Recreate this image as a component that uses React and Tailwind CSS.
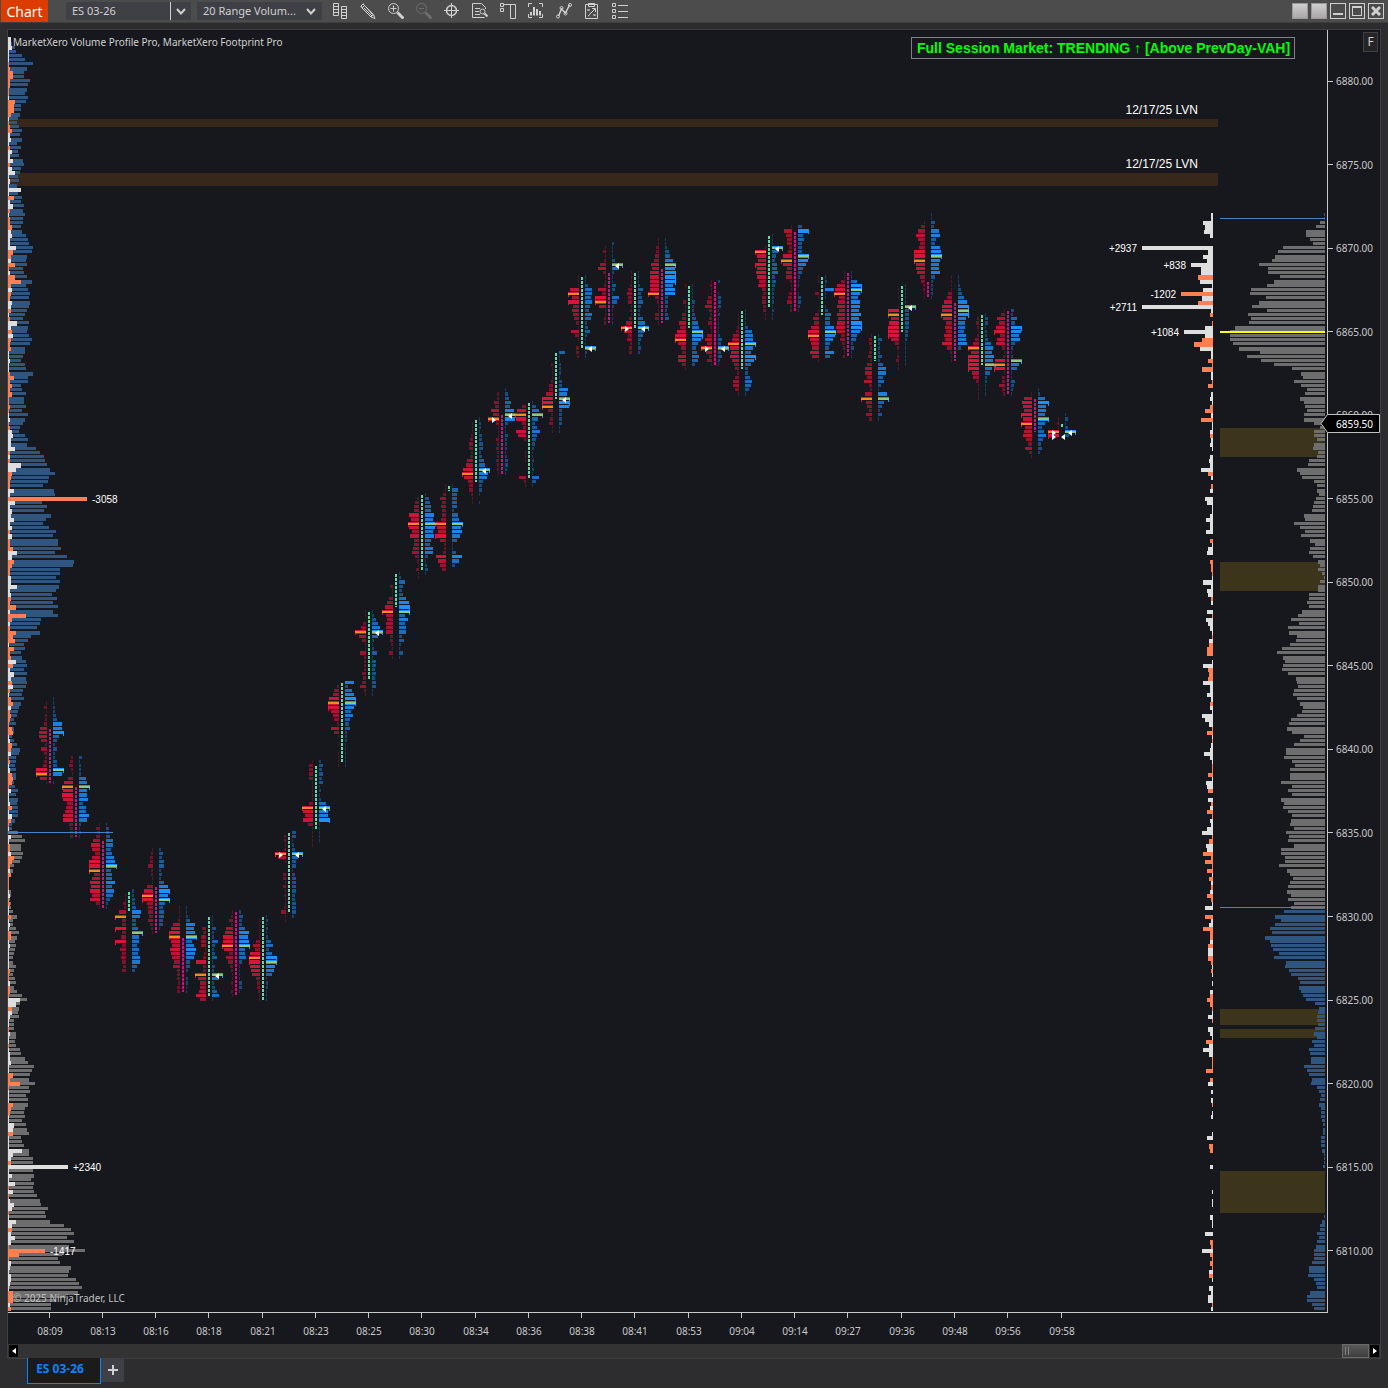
import React from 'react';

// Vertical scale: one row per 0.25 tick, row 0 is 6880.00
const ROW_PITCH = 4.1773;
const ROW_BASE = 79.16;
const CELL_BASE = 79.05;

const rowTop = (row) => Math.round(ROW_BASE + row * ROW_PITCH);
const rowHeight = (row) => rowTop(row) - rowTop(row - 1) - 1;
const cellTop = (row) => Math.round(CELL_BASE + row * ROW_PITCH);
const cellHeight = (row) => cellTop(row + 1) - cellTop(row) - 1;

const parsePairs = (text) =>
  text
    .trim()
    .split(/\s+/)
    .map((pair) => pair.split(',').map(Number));

// volume,delta for each row, from the top down
const LEFT_START = -10;
const LEFT_PROFILE = parsePairs(`
  1,3 4,3 7,4 8,1 14,1 17,1 25,-1 19,-2 16,-5 16,-5
  22,-2 20,-2 19,-1 17,-1 20,1 18,-7 13,-6 13,-6 12,-3 10,1
  9,-1 11,-2 14,-4 12,2 14,3 9,1 13,-2 10,4 11,2 15,5
  16,-2 13,4 12,7 10,1 11,2 9,1 0,13 10,1 14,-6 13,2
  16,5 15,-2 17,1 15,-2 15,-2 13,-4 14,3 18,4 20,2 21,2
  25,8 24,-5 19,-3 18,3 19,-7 15,-1 16,2 19,-7 24,-13 18,-3
  20,4 22,-3 21,-2 22,4 21,3 19,-3 17,1 15,-2 21,9 20,3
  19,-4 21,5 24,-3 22,-2 17,-3 17,1 15,1 13,2 17,1 18,1
  25,-2 20,-6 20,-2 13,-4 14,-2 18,-4 16,-1 16,-1 18,-2 14,-1
  20,1 17,2 15,-1 12,-2 11,4 17,5 20,3 19,3 28,7 32,-2
  36,2 37,-2 39,13 42,8 47,-4 41,-3 40,-2 35,-2 46,6 47,2
  46,0 34,7 39,2 36,4 43,3 38,6 35,2 41,4 48,-2 45,4
  50,-2 50,-2 53,-5 47,9 59,4 66,-6 65,-4 52,-2 52,-2 48,3
  52,3 51,9 48,2 44,3 49,-3 45,-2 50,-8 45,2 50,-18 33,-4
  32,2 29,-2 32,-8 23,-5 20,-7 16,1 17,-6 13,-2 14,-3 18,8
  19,-5 16,2 19,6 18,3 19,-4 18,5 15,-2 14,1 16,-3 13,-5
  11,3 10,-2 9,-3 6,-2 8,-1 6,-4 6,-5 4,1 6,2 9,-4
  12,-3 11,3 8,-1 8,-2 7,1 8,2 8,-4 8,-5 6,-4 7,-1
  10,3 8,1 10,1 9,2 10,-4 10,1 10,4 7,-3 4,-1 4,1
  10,0 14,3 17,1 13,-2 13,-2 15,3 14,-6 12,-4 6,-2 5,2
  0,-3 0,-1 0,-1 0,-1 3,1 3,2 2,-1 3,-2 3,1 5,1
  9,-3 5,1 5,2 8,1 11,-3 9,-3 7,1 8,2 7,1 6,1
  5,1 5,1 8,1 6,-2 5,-1 7,-1 8,2 6,-2 9,-2 14,-1
  19,12 12,8 11,-4 10,4 11,2 6,1 6,1 6,-1 8,2 8,1
  7,1 8,-1 12,1 13,2 17,2 20,3 26,1 24,1 22,-5 21,-2
  27,-12 21,-1 22,1 18,1 20,1 20,-5 17,-3 16,-2 17,1 14,1
  18,6 19,5 21,-5 13,1 14,1 16,1 21,14 21,5 25,3 25,-3
  25,0 25,1 26,4 23,1 26,7 25,-1 26,5 29,-1 32,2 33,6
  40,4 37,-1 38,1 42,8 56,4 63,-4 66,3 59,7 66,3 61,-1
  77,0 54,-11 50,-1 52,3 63,2 61,1 60,3 68,3 71,2 74,1
  70,-5 58,-5 48,-5 43,2 43,-3
`);

const RIGHT_START = 32;
const RIGHT_PROFILE = parsePairs(`
  1,2 1,2 5,10 9,8 19,9 19,3 15,0 12,0
  42,0 47,5 50,10 53,6 66,0 57,12 57,12 45,-15 51,13 58,1
  74,10 75,0 59,11 66,-15 73,0 58,2 77,-3 74,0 76,-1 90,8
  95,0 95,8 95,-11 92,-19 86,13 65,2 78,2 64,-5 51,-1 33,-11
  24,2 22,2 31,-1 24,-5 18,0 20,2 25,3 21,1 20,-3 18,-8
  21,2 21,-12 11,1 5,1 11,3 11,-3 8,2 11,3 12,1 7,0
  8,3 16,4 17,3 28,12 25,-5 23,2 11,0 8,-2 8,3 6,0
  9,8 11,6 12,1 13,1 21,3 20,7 31,3 25,3 20,7 24,0
  15,-3 10,1 15,5 16,6 12,0 7,-3 5,-2 7,-2 3,-1 1,1
  5,10 7,2 7,6 16,5 16,-2 18,2 16,0 23,6 27,-1 34,7
  26,5 37,3 36,1 28,-1 29,4 35,-4 43,-6 48,-6 42,0 40,1
  42,10 43,-5 37,-4 29,-5 28,10 27,3 31,3 32,6 28,2 25,-3
  22,3 23,1 28,11 34,8 36,4 38,-1 33,-6 21,1 25,-1 31,2
  39,3 39,9 41,3 33,1 30,-1 35,-1 35,-5 35,1 44,7 33,6
  37,-5 33,0 44,5 41,-2 42,3 37,-6 33,-1 34,3 35,2 31,6
  39,11 36,-1 37,-4 31,7 44,6 44,-10 40,-2 40,-8 46,-1 38,-6
  35,1 32,-4 35,2 37,-2 38,3 34,-6 37,-2 31,1 34,8 41,0
  50,-8 44,2 50,4 55,-10 53,-3 60,-3 55,3 54,-5 52,5 46,5
  51,-5 39,-2 40,1 36,-2 34,1 27,0 25,1 26,0 24,3 22,-3
  19,-6 10,-3 6,-1 7,1 8,5 8,-1 7,0 10,5 11,3 8,1
  13,-7 11,4 16,10 15,4 14,-1 14,-1 21,-1 18,-7 16,0 13,-3
  14,5 8,0 6,2 4,0 5,2 6,-1 4,0 4,1 4,2 3,0
  2,0 2,0 2,1 4,6 4,0 4,-4 3,-3 1,0 1,0 1,0
  2,3 0,0 0,0 0,0 0,0 0,0 0,1 0,0 0,1 0,1
  0,0 0,0 1,3 3,1 5,1 5,0 8,8 6,0 8,-3 9,-2
  11,11 11,-3 11,-1 13,-3 16,-1 16,4 17,-4 11,1 9,0 8,4
  15,2 18,5 18,5 13,-1 11,2
`);

const LEFT_CALLOUTS = [
  { row: 100, width: 79, label: '-3058' },
  { row: 260, width: 60, label: '+2340' },
  { row: 280, width: 37, label: '-1417' },
];

const RIGHT_CALLOUTS = [
  { row: 40, width: 71, label: '+2937' },
  { row: 44, width: 22, label: '+838' },
  { row: 51, width: 32, label: '-1202' },
  { row: 54, width: 71, label: '+2711' },
  { row: 60, width: 29, label: '+1084' },
];

// Footprint columns: first row, bid widths and ask widths (hex, one digit per row),
// bid POC row, ask POC row, body [from, to, up], sides with an imbalance arrow
const FOOTPRINTS = [
  [148, '01312237886263234bb71', '11223499b64242244b901', 166, 165, [729, 783, 0], ''],
  [162, '2342159baba678aa4333', '3122278b889477a82121', 169, 169, [787, 837, 0], ''],
  [178, '143479858bbb68a9a8a41', '1334775689b5669687421', 189, 188, [841, 908, 0], ''],
  [194, '011327b44b45b4645434', '2233498446b775768853', 200, 204, [892, 912, 1], ''],
  [184, '12335221169bb65545321', '2435523259b9b64554410', 195, 196, [887, 933, 0], ''],
  [198, '111279bb98a9867333233', '1124989b68a9844202211', 205, 205, [938, 992, 0], ''],
  [200, '00043555123a33b8667a6', '11142263235132b723571', 214, 214, [917, 996, 1], 'r'],
  [199, '124278aab947532112121', '24336a9ab667311113310', 207, 207, [912, 996, 0], ''],
  [200, '011111475abba98433211', '1212125736bb986122111', 210, 211, [917, 1000, 1], ''],
  [180, '02212b8100331312112511', '44123b6441344443344420', 185, 185, [833, 912, 1], 'lr'],
  [163, '14444111114ba8a511111', '24343412127b99b111110', 174, 174, [766, 829, 1], 'r'],
  [144, '0256abb86528510101111', '9379bb968545222111111', 149, 149, [683, 763, 1], ''],
  [127, '11035b741162222434621', '12468b621251443434411', 132, 132, [612, 679, 1], 'r'],
  [118, '000311468b76777332141', '1264347abb69677352141', 127, 127, [574, 607, 1], ''],
  [99, '02455a8ba795567421311', '1456698ba896588312310', 106, 106, [495, 570, 1], ''],
  [97, '113645445b98b6223a864', '165555267b9a85114a730', 106, 106, [486, 491, 1], ''],
  [81, '011123442367ab9544211', '122133442356b98433101', 94, 93, [420, 482, 1], 'r'],
  [74, '0225486b3111323223221', '134659ba3113222123321', 81, 80, [415, 474, 0], 'lr'],
  [77, '049ba43a8200111000721', '147b63585432112121741', 80, 80, [403, 478, 1], ''],
  [65, '00021112447bbb523411', '61122213398bba333311', 78, 76, [353, 399, 1], 'r'],
  [47, '1119b7b6765318410332', '11377675476235211b21', 51, 64, [277, 349, 1], 'r'],
  [39, '0131268311284bb71122', '21113b72114317521111', 53, 44, [273, 323, 0], 'r'],
  [46, '1112454412136b845233', '1112534532257b653232', 59, 59, [273, 328, 1], 'lr'],
  [38, '1133458799999b4211441', '112458babbb8aa3332340', 51, 44, [269, 323, 0], ''],
  [49, '100031144769bb8548841', '11113223467bb96457630', 62, 60, [286, 328, 1], ''],
  [48, '1211457323421575b6351', '2001333121111243b3421', 64, 64, [282, 365, 0], 'lr'],
  [55, '01112367b989754246641', '11113788b86b963357641', 63, 63, [311, 369, 1], ''],
  [37, '0001b98b9a97843443311', '111b64355634322221211', 41, 40, [236, 307, 1], 'r'],
  [35, '18655349b956621134522', '4b56444ba854211013321', 43, 42, [232, 311, 0], ''],
  [47, '1100410014658bb987971', '1219110136559ba854950', 61, 60, [277, 315, 1], ''],
  [46, '1148ab678687898453212', '116bb97998a8bb9652311', 51, 50, [273, 357, 0], ''],
  [61, '133234257758327b65363', '142224258856319b64241', 76, 76, [336, 361, 1], ''],
  [49, '011101bb8abbb84212311', '11111b444443321111110', 56, 54, [286, 332, 1], 'r'],
  [32, '001479756bbb998542211', '114389549ab9889422221', 43, 42, [282, 298, 0], ''],
  [47, '1111458aab967687a5211', '1123469bbb87768893000', 56, 55, [303, 361, 0], ''],
  [56, '02321246b8bbbb7631111', '133122368798b75221110', 64, 68, [315, 365, 1], ''],
  [55, '14869b589312abb133632', '3264ba894212b86114321', 68, 67, [311, 394, 0], ''],
  [74, '018a98b9b78964731', '127b887b746853420', 82, 81, [399, 432, 0], ''],
  [80, '0121bb', '1313b4', 84, 84, [424, 428, 1], 'lrx'],
].map(([start, bids, asks, bidPoc, askPoc, body, arrows], i) => ({
  start,
  bids,
  asks,
  bidPoc,
  askPoc,
  body,
  arrows,
  x: Math.floor(47 + 26.632 * i),
}));

const TIMES = [
  '08:09', '08:13', '08:16', '08:18', '08:21', '08:23', '08:25', '08:30', '08:34', '08:36',
  '08:38', '08:41', '08:53', '09:04', '09:14', '09:27', '09:36', '09:48', '09:56', '09:58',
];

const PRICES = Array.from({ length: 15 }, (_, i) => 6880 - i * 5);

const deltaFill = (delta) => (delta < 0 ? '#ff7f50' : '#dedede');

function Profile({ rows, start, edge, dir, colorFor }) {
  return rows.map(([volume], i) => {
    if (!volume) return null;
    const row = start + i;
    return (
      <rect
        key={row}
        x={dir > 0 ? edge : edge - volume}
        y={rowTop(row)}
        width={volume}
        height={rowHeight(row)}
        fill={colorFor(row)}
      />
    );
  });
}

function Deltas({ rows, start, edge, dir }) {
  return rows.map(([, delta], i) => {
    if (!delta) return null;
    const row = start + i;
    const width = Math.abs(delta);
    // no gap between neighbours, so the bars read as one column
    return (
      <rect
        key={row}
        x={dir > 0 ? edge : edge - width}
        y={rowTop(row)}
        width={width}
        height={rowTop(row + 1) - rowTop(row)}
        fill={deltaFill(delta)}
      />
    );
  });
}

function Callouts({ items, edge, dir }) {
  return items.map(({ row, width, label }) => (
    <g key={row}>
      <rect
        x={dir > 0 ? edge : edge - width}
        y={rowTop(row)}
        width={width}
        height="4"
        fill={deltaFill(label.startsWith('-') ? -1 : 1)}
      />
      <text
        x={dir > 0 ? edge + width + 5 : edge - width - 5}
        y={rowTop(row) + 6}
        textAnchor={dir > 0 ? 'start' : 'end'}
        fill="#ffffff"
        className="font-['Liberation_Sans',sans-serif] text-[10px]"
      >
        {label}
      </text>
    </g>
  ));
}

function Footprint({ data }) {
  const { start, bids, asks, bidPoc, askPoc, body, arrows, x } = data;
  const [from, to, up] = body;
  const ask = x + 6;

  const cells = (digits, side) =>
    [...digits].map((digit, i) => {
      const width = parseInt(digit, 16);
      if (!width) return null;
      const row = start + i;
      const left = side === 'bid' ? x - width : ask;
      const fill = side === 'bid' ? '#dc143c' : '#1e90ff';
      return (
        <g key={`${side}${row}`} fill={fill} fillOpacity={0.23 + width * 0.07}>
          <rect x={left} y={cellTop(row)} width={width} height={cellHeight(row)} />
          {width === 11 && (
            <rect x={side === 'bid' ? left : left + 10} y={cellTop(row) + 3} width="1" height="2" />
          )}
        </g>
      );
    });

  return (
    <g>
      {cells(bids, 'bid')}
      {cells(asks, 'ask')}
      <rect x={x - 11} y={cellTop(bidPoc) + 1} width="11" height="2" fill="#f28c1e" />
      <rect x={ask} y={cellTop(askPoc) + 1} width="11" height="2" fill="#8fc97f" />
      <path
        d={`M${x + 3} ${from}V${to}`}
        stroke={up ? '#66d9a8' : '#c71585'}
        strokeWidth="2"
        strokeDasharray="3 1"
      />
      {arrows.includes('l') && (
        <path d={`M${x - 7} ${cellTop(bidPoc)}v6l4 -3z`} fill="#ffffff" shapeRendering="auto" />
      )}
      {arrows.includes('r') && (
        <path d={`M${ask + 7} ${cellTop(askPoc)}v6l-4 -3z`} fill="#ffffff" shapeRendering="auto" />
      )}
      {arrows.includes('x') && (
        <path
          d={`M${x - 7} ${cellTop(bidPoc) + 4}v6l4 -3zM${ask} ${cellTop(askPoc) + 4}v6l-4 -3z`}
          fill="#ffffff"
          shapeRendering="auto"
        />
      )}
    </g>
  );
}

function Chart() {
  return (
    <svg
      viewBox="8 30 1372 1314"
      className="block h-auto w-full bg-[#17181d] font-['Noto_Sans','Open_Sans',sans-serif]"
      shapeRendering="crispEdges"
      role="img"
      aria-label="ES 03-26 footprint chart"
    >
      <g fill="#38281b">
        <rect x="8" y="119" width="1210" height="8" />
        <rect x="8" y="173" width="1210" height="13" />
      </g>
      <g fill="#3c351b">
        <rect x="1220" y="428" width="105" height="29" />
        <rect x="1220" y="562" width="105" height="29" />
        <rect x="1220" y="1009" width="105" height="16" />
        <rect x="1220" y="1029" width="105" height="9" />
        <rect x="1220" y="1171" width="105" height="42" />
      </g>

      <Profile rows={LEFT_PROFILE} start={LEFT_START} edge={8} dir={1} colorFor={(row) => (row < 180 ? '#2f5680' : '#6e6e6e')} />
      <Deltas rows={LEFT_PROFILE} start={LEFT_START} edge={8} dir={1} />
      <Callouts items={LEFT_CALLOUTS} edge={8} dir={1} />

      <Profile rows={RIGHT_PROFILE} start={RIGHT_START} edge={1325} dir={-1} colorFor={(row) => (row > 33 && row < 199 ? '#6e6e6e' : '#2f5680')} />
      <Deltas rows={RIGHT_PROFILE} start={RIGHT_START} edge={1213} dir={-1} />
      <Callouts items={RIGHT_CALLOUTS} edge={1213} dir={-1} />

      {FOOTPRINTS.map((data) => (
        <Footprint key={data.x} data={data} />
      ))}

      <g fill="#4682c8">
        <rect x="8" y="832" width="105" height="1" />
        <rect x="1220" y="218" width="105" height="1" />
        <rect x="1220" y="907" width="105" height="1" />
      </g>
      <rect x="1220" y="331" width="105" height="2" fill="#ffff00" />

      <g fill="#c8c8c8">
        <rect x="1327" y="30" width="1" height="1283" />
        <rect x="8" y="1312" width="1320" height="1" />
        {PRICES.map((price, i) => (
          <rect key={price} x="1328" y={Math.round(80.5 + i * 83.55)} width="5" height="1" />
        ))}
        {TIMES.map((time, i) => (
          <rect key={time} x={Math.floor(49 + i * 53.264)} y="1313" width="1" height="5" />
        ))}
      </g>
      <g fill="#c8c8c8" className="text-[10px]">
        {PRICES.map((price, i) => (
          <text key={price} x="1336" y={Math.round(85 + i * 83.55)}>
            {price.toFixed(2)}
          </text>
        ))}
        {TIMES.map((time, i) => (
          <text key={time} x={Math.floor(50 + i * 53.264)} y="1335" textAnchor="middle">
            {time}
          </text>
        ))}
      </g>

      <path d="M1321 423.500L1327.500 414.500H1379.500V432.500H1327.500Z" fill="#000000" stroke="#c0c0c0" shapeRendering="auto" />
      <text x="1336" y="428" fill="#ffffff" className="text-[10px]">6859.50</text>

      <text x="13" y="46" fill="#d0d0d0" className="text-[10px]">
        MarketXero Volume Profile Pro, MarketXero Footprint Pro
      </text>
      <text x="13" y="1302" fill="#c0c0c0" className="text-[10px]">© 2025 NinjaTrader, LLC</text>
      <g fill="#ffffff" className="font-['Liberation_Sans',sans-serif] text-[12px]">
        <text x="1198" y="114" textAnchor="end">12/17/25 LVN</text>
        <text x="1198" y="168" textAnchor="end">12/17/25 LVN</text>
      </g>
      <rect x="911.500" y="37.500" width="383" height="21" fill="#17181d" stroke="#808080" />
      <text x="917" y="53" fill="#00ff00" className="font-['Liberation_Sans',sans-serif] text-[14px] font-bold">
        Full Session Market: TRENDING ↑ [Above PrevDay-VAH]
      </text>
    </svg>
  );
}

const TOOLS = [
  { name: 'Bars', art: <path d="M1.500 .5h5v12h-5zM1.500 3.500h5M1.500 6.500h5M1.500 9.500h5M9.500 3.500h5v12h-5zM9.500 6.500h5M9.500 9.500h5M9.500 12.500h5" /> },
  { name: 'Drawing tools', art: <path d="M.5 3.500l3-3M2 5l3-3M1 3l1 2 9 9 4 1.500-1.500-4-9-9L3 1M4 5l8 8M5.500 3.500l7 8M11 14l2.500-2.500" /> },
  { name: 'Zoom in', art: <><circle cx="5.500" cy="5.500" r="5" /><path d="M5.500 2.500v6M2.500 5.500h6" /><path d="M9.500 9.500l6 6" strokeWidth="3" /></> },
  { name: 'Zoom out', dim: true, art: <><circle cx="5.500" cy="5.500" r="5" /><path d="M3 5.500h5" /><path d="M9.500 9.500l6 6" strokeWidth="3" /></> },
  { name: 'Crosshair', art: <><circle cx="7.500" cy="7.500" r="5" strokeWidth="1.500" /><path d="M7.500 0v15M0 7.500h15" /></> },
  { name: 'Data box', art: <><path d="M13.500 6V4.500l-4-4h-9v14h12M3 5.500h5M3 8.500h4M3 11.500h5" /><circle cx="10.500" cy="8.500" r="2.500" /><path d="M12.500 10.500l3 3" strokeWidth="2" /></> },
  { name: 'Chart trader', art: <path d="M.5 .5h3v3h-3zM.5 5.500h3v3h-3zM3.500 1.500h12v14h-5v-14" /> },
  { name: 'Chart', art: <><path d="M.5 4V.5H4M11 .5h3.500V4M.5 11v3.500H4M11 14.500h3.500V11" /><path d="M3 12.500V9M6 12.500V4M9 12.500V6M12 12.500V8" strokeWidth="2" /></> },
  { name: 'Indicators', art: <><path d="M2.500 13l3-7 4 4 4-8" strokeWidth="1.500" /><circle cx="2" cy="13.500" r="1.500" /><circle cx="5.500" cy="5" r="1.500" /><circle cx="9.500" cy="10.500" r="1.500" /><circle cx="14" cy="2" r="1.500" /></> },
  { name: 'Strategies', art: <path d="M1.500 1.500h12v14h-12zM4.500 .5h6v3h-6zM7 10l4-4M8 5.500h3.500V9M3.500 6l2 2M5.500 6l-2 2M9.500 11l2 2M11.500 11l-2 2M4 13c2 0 1-2.500 3-3" /> },
  { name: 'Properties', art: <path d="M.5 .5h3v3h-3zM.5 6.500h3v3h-3zM.5 12.500h3v3h-3zM6 2.500h10M6 8.500h10M6 14.500h10" /> },
];

function Chevron() {
  return (
    <svg viewBox="0 0 10 7" className="h-[7px] w-[10px]" fill="none" stroke="#d0d0d0" strokeWidth="2" aria-hidden="true">
      <path d="M1 1l4 4.500L9 1" />
    </svg>
  );
}

function WindowButton({ label, children }) {
  return (
    <button type="button" aria-label={label} className="flex h-4 w-4 items-center justify-center border border-[#d0d0d0]">
      {children}
    </button>
  );
}

function Toolbar() {
  return (
    <header className="flex h-[23px] items-start border-b border-[#3f3f42] bg-[#4c4c4c] pr-1 pl-px">
      <h1 className="flex h-[22px] w-[47px] shrink-0 items-center justify-center bg-[#dc3c00] text-[14px] text-white">Chart</h1>
      <div className="mt-0.5 ml-[18px] flex h-[18px] w-[125px] shrink-0 bg-[#3f3f46]">
        <input
          aria-label="Instrument"
          defaultValue="ES 03-26"
          className="w-[105px] border-r border-[#d0d0d0] bg-transparent px-1.5 text-[11px] text-[#d0d0d0] outline-none"
        />
        <button type="button" aria-label="Select instrument" className="flex flex-1 items-center justify-center">
          <Chevron />
        </button>
      </div>
      <div className="relative mt-0.5 ml-1.5 h-[18px] w-[125px] shrink-0 bg-[#3f3f46]">
        <select aria-label="Interval" className="block h-full w-full appearance-none bg-transparent pl-1.5 text-[11px] text-[#d0d0d0] outline-none">
          <option>20 Range Volum...</option>
        </select>
        <span className="pointer-events-none absolute top-1.5 right-1.5">
          <Chevron />
        </span>
      </div>
      <nav className="ml-1 flex h-[22px] items-center" aria-label="Chart tools">
        {TOOLS.map(({ name, art, dim }) => (
          <button key={name} type="button" aria-label={name} className="flex h-[22px] w-7 items-center justify-center">
            <svg
              viewBox="0 0 16 16"
              className={dim ? 'h-4 w-4 opacity-25' : 'h-4 w-4'}
              fill="none"
              stroke="#d0d0d0"
              aria-hidden="true"
            >
              {art}
            </svg>
          </button>
        ))}
      </nav>
      <div className="ml-auto flex h-[22px] items-center gap-[3px]">
        <button type="button" aria-label="Instrument link" className="h-4 w-4 border border-[#999] bg-linear-to-b from-[#d0cfd0] to-[#aaa6a8]" />
        <button type="button" aria-label="Interval link" className="h-4 w-4 border border-[#999] bg-linear-to-b from-[#d0cfd0] to-[#aaa6a8]" />
        <WindowButton label="Minimize">
          <span className="mt-1.5 h-0.5 w-2.5 bg-[#d0d0d0]" />
        </WindowButton>
        <WindowButton label="Maximize">
          <span className="h-2.5 w-2.5 border border-t-2 border-[#d0d0d0]" />
        </WindowButton>
        <WindowButton label="Close">
          <svg viewBox="0 0 10 10" className="h-2.5 w-2.5" stroke="#d0d0d0" strokeWidth="3" aria-hidden="true">
            <path d="M1 1l8 8M9 1L1 9" />
          </svg>
        </WindowButton>
      </div>
    </header>
  );
}

function ScrollStrip() {
  return (
    <div className="flex h-[14px] items-center justify-between bg-[#333333]">
      <button type="button" aria-label="Scroll left" className="ml-px flex h-3 w-[9px] items-center justify-center bg-black">
        <svg viewBox="0 0 4 6" className="h-1.5 w-1" fill="#ffffff" aria-hidden="true">
          <path d="M4 0v6L0 3z" />
        </svg>
      </button>
      <div className="flex items-center gap-px">
        <div className="flex h-[14px] w-[27px] items-center gap-0.5 border border-[#6a6a6a] bg-linear-to-b from-[#5a5a5a] to-[#3e3e3e] pl-0.5">
          <span className="h-2 w-px bg-[#808080]" />
          <span className="h-2 w-px bg-[#808080]" />
        </div>
        <button type="button" aria-label="Scroll right" className="mr-px flex h-3 w-[9px] items-center justify-center bg-black">
          <svg viewBox="0 0 4 6" className="h-1.5 w-1" fill="#ffffff" aria-hidden="true">
            <path d="M0 0v6l4-3z" />
          </svg>
        </button>
      </div>
    </div>
  );
}

export default function App() {
  return (
    <div className="min-h-screen bg-[#2d2d30] font-['Noto_Sans','Open_Sans',sans-serif]">
      <Toolbar />
      <main className="mx-[7px] mt-1.5 border border-[#3f3f42]">
        <div className="relative">
          <Chart />
          <button type="button" className="absolute top-0.5 right-0.5 h-5 w-[15px] border border-[#3f3f46] bg-[#252528] text-[12px] leading-4 text-[#d0d0d0]">
            F
          </button>
        </div>
        <ScrollStrip />
      </main>
      <footer className="-mt-px flex h-[30px] items-start pl-[27px]">
        <button type="button" className="h-[26px] w-[74px] border border-t-0 border-[#0a84ff] bg-[#1b1b1c] pr-2 pb-1 text-[12px] font-bold text-[#0a84ff]">
          ES 03-26
        </button>
        <button type="button" aria-label="Add tab" className="flex h-6 w-[23px] items-center justify-center bg-[#3f3f46]">
          <svg viewBox="0 0 10 10" className="h-2.5 w-2.5" stroke="#d0d0d0" strokeWidth="2" aria-hidden="true">
            <path d="M5 0v10M0 5h10" />
          </svg>
        </button>
      </footer>
    </div>
  );
}
